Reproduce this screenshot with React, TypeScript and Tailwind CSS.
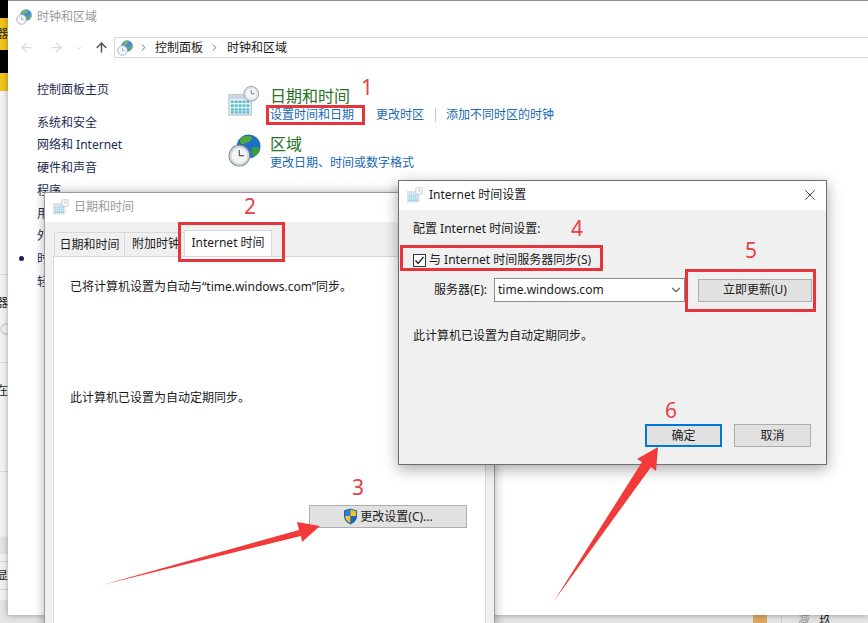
import { ArrowLeft, ArrowRight, ArrowUp, ChevronDown, ChevronRight, X } from "lucide-react";

const FONT = "font-['Noto_Sans','Noto_Sans_CJK_SC',sans-serif]";

function CalendarClock({ size = 32, faded = false }: { size?: number; faded?: boolean }) {
  return (
    <svg width={size} height={size} viewBox="0 0 32 32" opacity={faded ? 0.75 : 1}>
      <rect x="1" y="9" width="23" height="21" fill="#eef3f6" stroke="#a9b9c2" />
      <rect x="1.5" y="9.5" width="22" height="4" fill="#c9d8e0" />
      {[3, 7, 11, 15, 19].map((x) =>
        [15, 19, 23, 26].map((y) => <rect key={`${x}-${y}`} x={x} y={y} width="3" height="2.5" fill="#58bcd0" />)
      )}
      <circle cx="24" cy="8" r="7.6" fill="#dfe3e6" stroke="#9aa2a8" />
      <circle cx="24" cy="8" r="5.4" fill="#f3f5f6" />
      <path d="M24 4v4h3.5" fill="none" stroke="#7d848a" strokeWidth="1" />
    </svg>
  );
}

function GlobeClock({ size = 32, faded = false }: { size?: number; faded?: boolean }) {
  return (
    <svg width={size} height={size} viewBox="0 0 32 32" opacity={faded ? 0.8 : 1}>
      <circle cx="20" cy="12" r="11.5" fill="#1f6fc4" />
      <path d="M12 4c3-2 8-3 11-1 1 2-1 4-3 5-3 0-4 2-6 2-2-1-3-3-2-6z" fill="#4faa3c" />
      <path d="M24 13c3-1 6 0 7 1-1 4-3 7-6 8-2-2-3-6-1-9z" fill="#3f9c38" />
      <circle cx="11" cy="21" r="10" fill="#d9dcde" stroke="#878e93" />
      <circle cx="11" cy="21" r="7.4" fill="#f4f5f6" />
      <path d="M11 15.5V21h4.5" fill="none" stroke="#555c61" strokeWidth="1.1" />
    </svg>
  );
}

function Shield() {
  return (
    <svg width="15" height="17" viewBox="0 0 15 17">
      <path d="M7.5 0.5 14 2.5V8c0 4-3 7-6.5 8.5C4 15 1 12 1 8V2.5z" fill="#1d5fa8" />
      <path d="M7.5 1.5V8H2V3.2z" fill="#2f7fca" />
      <path d="M7.5 1.5 13 3.2V8H7.5z" fill="#f4c430" />
      <path d="M2 8h5.5v7.3C4.6 14 2.3 11.5 2 8z" fill="#f4c430" />
      <path d="M7.5 8H13c-.3 3.500-2.600 6-5.500 7.300z" fill="#1f6ab5" />
    </svg>
  );
}

function LeftStrip() {
  return (
    <div className="absolute left-0 top-0 flex h-[600px] w-2 flex-col overflow-hidden bg-[#f2f2f2] text-xs text-[#222]">
      <div className="h-[18px] shrink-0 bg-black" />
      <div className="flex h-[32px] shrink-0 items-center justify-end bg-[#f3c31c]">
        <span className="shrink-0">器</span>
      </div>
      <div className="h-[23px] shrink-0 bg-black" />
      <div className="h-[18px] shrink-0 bg-[#f3c31c]" />
      <div className="h-[184px] shrink-0 border-b border-[#dcdcdc]" />
      <div className="flex h-[88px] shrink-0 flex-col items-end border-b border-[#dcdcdc] pt-[20px]">
        <span className="shrink-0">器</span>
        <span className="mt-[12px] h-3 w-3 shrink-0 translate-x-1 rounded-full border-2 border-[#d5d5d5]" />
      </div>
      <div className="flex h-[109px] shrink-0 items-start justify-end border-b border-[#dcdcdc] pt-[20px]">
        <span className="shrink-0">在</span>
      </div>
      <div className="h-[65px] shrink-0 border-b border-[#ececec]" />
      <div className="h-[17px] shrink-0 bg-[#e4e4e4]" />
      <div className="h-[8px] shrink-0 border-b border-[#d5d5d5]" />
      <div className="flex h-[28px] shrink-0 items-center justify-end border-b border-[#d5d5d5]">
        <span className="shrink-0">显</span>
      </div>
    </div>
  );
}

function MainWindow() {
  const sidebar = ["系统和安全", "网络和 Internet", "硬件和声音", "程序", "用户帐户", "外观和个性化", "时钟和区域", "轻松使用"];
  return (
    <div className="absolute left-2 top-0 flex h-[615px] w-[860px] flex-col border-t border-[#8c8c8c] bg-white shadow-[0_0_6px_rgba(0,0,0,0.35)]">
      <div className="flex h-[36px] shrink-0 items-center gap-[5px] pb-[4px] pl-2">
        <GlobeClock size={16} faded />
        <span className="text-xs text-[#9a9a9a]">时钟和区域</span>
      </div>
      <div className="flex h-[21px] shrink-0 items-center pl-[11px]">
        <ArrowLeft size={15} className="text-[#d8d8d8]" />
        <ArrowRight size={15} className="ml-[15px] text-[#d8d8d8]" />
        <ChevronDown size={10} className="ml-[10px] text-[#d8d8d8]" />
        <ArrowUp size={15} strokeWidth={2.4} className="ml-[10px] text-[#555]" />
        <div className="ml-[5px] flex h-[21px] flex-1 items-center border border-r-0 border-[#d9d9d9] pl-[2px] text-xs text-[#1a1a1a]">
          <GlobeClock size={16} faded />
          <ChevronRight size={11} className="ml-[5px] text-[#666]" />
          <span className="ml-[6px]">控制面板</span>
          <ChevronRight size={11} className="ml-[6px] text-[#666]" />
          <span className="ml-[7px]">时钟和区域</span>
        </div>
      </div>
      <div className="flex flex-1">
        <div className="relative w-[220px] shrink-0 pl-[29px] pt-[21px] text-xs leading-[22.7px] text-[#1b2b50]">
          <div className="mb-[10px]">控制面板主页</div>
          {sidebar.map((item) => (
            <div key={item}>{item}</div>
          ))}
          <span className="absolute left-[11px] top-[198px] h-[5px] w-[5px] rounded-full bg-[#14235a]" />
        </div>
        <div className="pt-[28px]">
          <div className="flex">
            <div className="w-[42px] shrink-0">
              <CalendarClock size={31} />
            </div>
            <div>
              <div className="text-base leading-5 text-[#267326]">日期和时间</div>
              <div className="flex items-center text-xs leading-[18px] text-[#1768b5]">
                <span>设置时间和日期</span>
                <span className="ml-[22px]">更改时区</span>
                <span className="ml-[11px] h-[14px] w-px bg-[#c9c9c9]" />
                <span className="ml-[10px]">添加不同时区的时钟</span>
              </div>
            </div>
          </div>
          <div className="mt-[10px] flex">
            <div className="w-[42px] shrink-0">
              <GlobeClock size={33} />
            </div>
            <div>
              <div className="text-base leading-5 text-[#267326]">区域</div>
              <div className="text-xs leading-[18px] text-[#1768b5]">更改日期、时间或数字格式</div>
            </div>
          </div>
        </div>
      </div>
    </div>
  );
}

function DateTimeDialog() {
  return (
    <div className="absolute left-[44px] top-[192px] flex h-[440px] w-[451px] flex-col border border-[#9a9a9a] bg-[#f0f0f0] shadow-[0_0_10px_rgba(0,0,0,0.3)]">
      <div className="flex h-[29px] shrink-0 items-center gap-[5px] bg-white pb-[1px] pl-2">
        <CalendarClock size={16} faded />
        <span className="text-xs text-[#9a9a9a]">日期和时间</span>
      </div>
      <div className="flex h-[10px] shrink-0" />
      <div className="flex h-[24px] shrink-0 items-end pl-[9px] text-xs text-[#1a1a1a]">
        <div className="flex h-[24px] w-[71px] items-center justify-center border border-b-0 border-[#d9d9d9] bg-[#f0f0f0]">日期和时间</div>
        <div className="flex h-[24px] w-[59px] items-center border-y border-t-[#d9d9d9] border-b-transparent pl-[7px]">
          <span className="shrink-0">附加时钟</span>
        </div>
        <div className="relative z-10 flex h-[26px] w-[88px] items-center justify-center border border-b-0 border-[#d9d9d9] bg-white pb-[1px]">Internet 时间</div>
      </div>
      <div className="mx-2 flex flex-1 flex-col border border-[#d9d9d9] bg-white pl-[16px] pr-[18px] pt-[20px] text-xs leading-5 text-[#1a1a1a]">
        <div>已将计算机设置为自动与“time.windows.com”同步。</div>
        <div className="mt-[91px]">此计算机已设置为自动定期同步。</div>
        <div className="mt-[97px] flex justify-end">
          <button className="flex h-[23px] w-[158px] items-center justify-center gap-[2px] border border-[#adadad] bg-[#e1e1e1] text-xs text-[#1a1a1a]">
            <Shield />
            <span>更改设置(C)...</span>
          </button>
        </div>
      </div>
    </div>
  );
}

function InternetTimeDialog() {
  return (
    <div className="absolute left-[398px] top-[180px] flex h-[285px] w-[429px] flex-col border border-[#6f6f6f] bg-[#f0f0f0] shadow-[0_4px_14px_rgba(0,0,0,0.35)]">
      <div className="flex h-[29px] shrink-0 items-center gap-[6px] bg-white pb-[1px] pl-[8px] pr-[7px] text-xs text-[#1a1a1a]">
        <CalendarClock size={16} faded />
        <span className="flex-1">Internet 时间设置</span>
        <X size={18} strokeWidth={1.1} className="text-[#222]" />
      </div>
      <div className="flex flex-1 flex-col pl-[14px] pr-[15px] pt-[9px] text-xs leading-5 text-[#1a1a1a]">
        <div>配置 Internet 时间设置:</div>
        <div className="mt-[11px] flex items-center gap-[3px]">
          <span className="flex h-[13px] w-[13px] items-center justify-center border border-[#333] bg-white">
            <svg width="11" height="11" viewBox="0 0 11 11">
              <path d="M1.500 5.500 4.200 8.500 9.500 1.800" fill="none" stroke="#222" strokeWidth="1.3" />
            </svg>
          </span>
          <span>与 Internet 时间服务器同步(S)</span>
        </div>
        <div className="mt-[8px] flex items-center">
          <span className="w-[81px] shrink-0 pl-[21px]">服务器(E):</span>
          <div className="flex h-[24px] w-[191px] shrink-0 items-center border border-[#8a8a8a] bg-white pl-[3px] pr-[1px] text-xs">
            <span className="flex-1">time.windows.com</span>
            <ChevronDown size={14} className="text-[#666]" />
          </div>
          <button className="ml-[13px] h-[23px] w-[114px] shrink-0 border border-[#adadad] bg-[#e1e1e1] text-xs">立即更新(U)</button>
        </div>
        <div className="mt-[24px]">此计算机已设置为自动定期同步。</div>
        <div className="mt-[78px] flex justify-end gap-3">
          <button className="h-[23px] w-[77px] border-2 border-[#0078d7] bg-[#e1e1e1] text-xs">确定</button>
          <button className="h-[23px] w-[77px] border border-[#adadad] bg-[#e1e1e1] text-xs">取消</button>
        </div>
      </div>
    </div>
  );
}

function Callout({ n, className }: { n: string; className: string }) {
  return <span className={`absolute text-[21px] leading-none text-[#e8404a] ${className}`}>{n}</span>;
}

function Annotations() {
  return (
    <>
      <div className="absolute left-[266px] top-[105px] h-[20px] w-[99px] border-[3px] border-[#e5343a]" />
      <div className="absolute left-[178px] top-[222px] h-[40px] w-[107px] border-[3px] border-[#e5343a]" />
      <div className="absolute left-[400px] top-[245px] h-[26px] w-[203px] border-[3px] border-[#e5343a]" />
      <div className="absolute left-[685px] top-[269px] h-[43px] w-[131px] border-[3px] border-[#e5343a]" />
      <Callout n="1" className="left-[361px] top-[77px]" />
      <Callout n="2" className="left-[244px] top-[196px]" />
      <Callout n="3" className="left-[352px] top-[477px]" />
      <Callout n="4" className="left-[571px] top-[218px]" />
      <Callout n="5" className="left-[745px] top-[240px]" />
      <Callout n="6" className="left-[665px] top-[400px]" />
      <svg className="absolute left-0 top-0" width="868" height="623" viewBox="0 0 868 623">
        <polygon points="102,585 299,530 297,522 320,526 302,542 301,536" fill="#f23a3a" />
        <polygon points="554,601 642,462 637,459 658,447 656,471 651,467" fill="#f23a3a" />
      </svg>
    </>
  );
}

export default function App() {
  return (
    <div className={`relative h-[623px] w-[868px] overflow-hidden bg-[#e4e4e4] ${FONT}`}>
      <LeftStrip />
      <div className="absolute left-[753px] top-[615px] h-2 w-[14px] bg-[#dba765]" />
      <div className="absolute left-[781px] top-[615px] h-2 w-px bg-[#cfcfcf]" />
      <span className="absolute left-[798px] top-[612px] text-xs leading-4 text-[#999]">减</span>
      <span className="absolute left-[819px] top-[612px] text-xs leading-4 text-[#222]">玖</span>
      <MainWindow />
      <DateTimeDialog />
      <InternetTimeDialog />
      <Annotations />
    </div>
  );
}
